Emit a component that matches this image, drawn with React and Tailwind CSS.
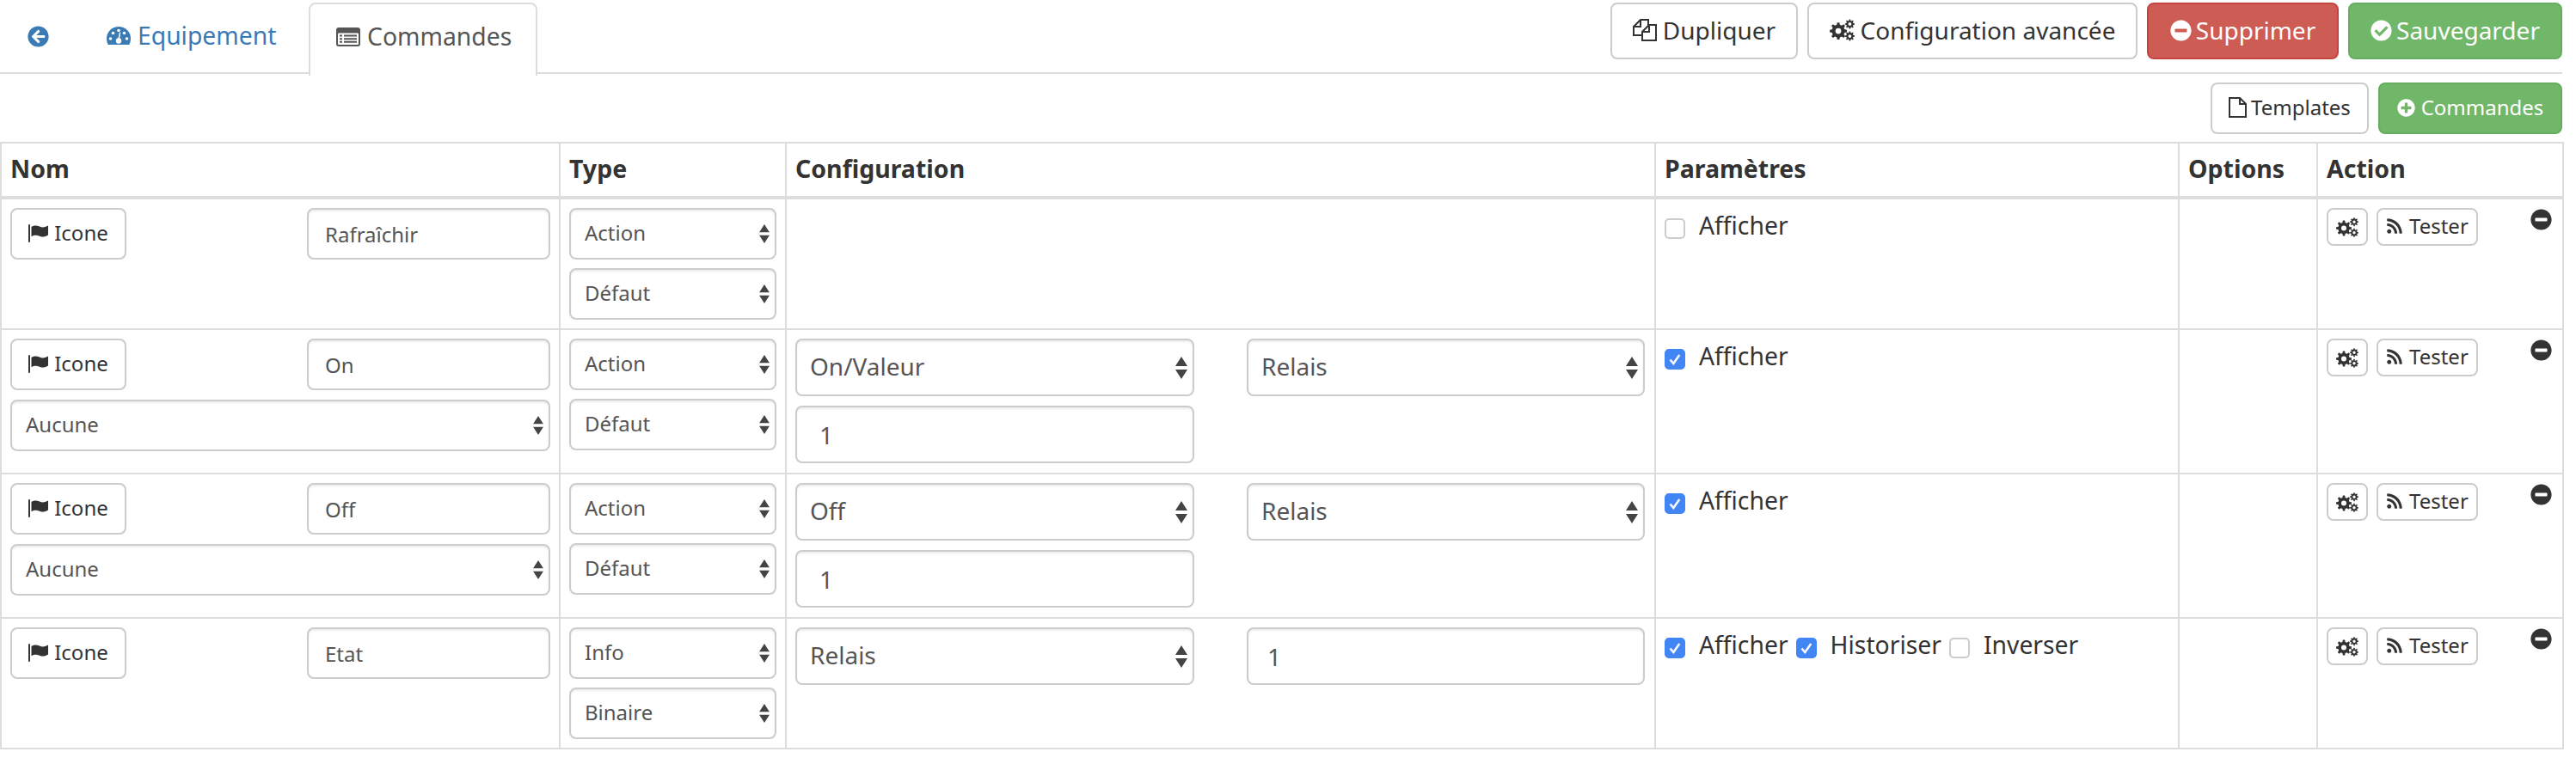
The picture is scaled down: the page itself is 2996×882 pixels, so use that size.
import React from 'react';
import { FaArrowCircleLeft, FaMinusCircle, FaCheckCircle, FaPlusCircle, FaRss } from 'react-icons/fa';

// font-awesome 4 shapes that the icon packages no longer have
const gearPath = (cx, cy, outer, inner, hole, teeth) => {
  let d = '';
  const step = (Math.PI * 2) / teeth;
  for (let i = 0; i < teeth; i++) {
    const a = i * step;
    const pts = [
      [inner, a - step * 0.3],
      [outer, a - step * 0.17],
      [outer, a + step * 0.17],
      [inner, a + step * 0.3],
    ];
    pts.forEach(([r, t], j) => {
      d += `${i === 0 && j === 0 ? 'M' : 'L'}${(cx + r * Math.cos(t)).toFixed(2)} ${(cy + r * Math.sin(t)).toFixed(2)}`;
    });
  }
  d += `Z M${cx - hole} ${cy}a${hole} ${hole} 0 1 0 ${hole * 2} 0a${hole} ${hole} 0 1 0 ${-hole * 2} 0Z`;
  return d;
};

const Cogs = ({ className = 'h-[23px] w-[26px]' }) => (
  <svg viewBox="0 0 26 23" className={`shrink-0 fill-current ${className}`}>
    <path fillRule="evenodd" d={gearPath(9, 12.5, 9, 6.8, 3, 8)} />
    <path fillRule="evenodd" d={gearPath(21, 5.2, 5, 3.7, 1.7, 8)} />
    <path fillRule="evenodd" d={gearPath(21, 17.8, 5, 3.7, 1.7, 8)} />
  </svg>
);

const Flag = () => (
  <svg viewBox="0 0 23 21" className="h-[21px] w-[23px] shrink-0 fill-current">
    <rect x="0" y="0" width="2" height="21" rx="1" />
    <path d="M3.5 3C7 .8 10 1.2 13 2.6c3.200 1.400 6 1.100 10-1V12.500c-4 2.300-6.800 2.600-10 1.200-3-1.300-6-1.400-9.500.6z" />
  </svg>
);

const Gauge = () => (
  <svg viewBox="0 0 28 21" className="h-[21px] w-[28px] shrink-0">
    <path fill="currentColor" d="M0 14a14 14 0 0 1 28 0c0 2.500-.7 5-1.800 7H1.800C.7 19 0 16.500 0 14z" />
    <g fill="#fff">
      <circle cx="4.500" cy="14" r="1.800" />
      <circle cx="7.500" cy="7.500" r="1.800" />
      <circle cx="14" cy="4.500" r="1.800" />
      <circle cx="20.500" cy="7.500" r="1.800" />
      <circle cx="23.500" cy="14" r="1.800" />
      <circle cx="14" cy="16.500" r="3.200" />
      <path d="M12.800 16l2.200-9.500 1.200.3-1.400 9.600z" />
    </g>
  </svg>
);

const ListAlt = () => (
  <svg viewBox="0 0 28 22" className="h-[22px] w-[28px] shrink-0">
    <rect width="28" height="22" rx="3" fill="currentColor" />
    <rect x="2" y="6.500" width="24" height="13.500" rx="1" fill="#fff" />
    <path fill="currentColor" d="M4 8.500h3v2H4zM4 12.200h3v2H4zM4 15.800h3v2H4zM9 8.500h15v2H9zM9 12.200h15v2H9zM9 15.800h15v2H9z" />
  </svg>
);

const Files = () => (
  <svg viewBox="0 0 28 26" className="h-[26px] w-[28px] shrink-0 fill-none stroke-current stroke-2">
    <path d="M10 19H1V9l8-8h9v7" />
    <path d="M9 1v8H1" />
    <path d="M19 7h8v18H11V15z" />
    <path d="M19 7v8h-8" />
  </svg>
);

const FileO = () => (
  <svg viewBox="0 0 21 24" className="h-[24px] w-[21px] shrink-0 fill-none stroke-current stroke-2">
    <path d="M1 1h12l7 7v15H1z" />
    <path d="M13 1v7h7" />
  </svg>
);

const Btn = ({ children, className = '' }) => (
  <button className={`flex items-center justify-center rounded-lg border-2 pb-[2px] ${className}`}>
    {children}
  </button>
);

const Field = ({ value, className = '' }) => (
  <input
    readOnly
    defaultValue={value}
    className={`block rounded-lg border-2 border-[#ccc] bg-white text-[#555] shadow-[inset_0_2px_2px_rgba(0,0,0,0.075)] outline-none ${className}`}
  />
);

const Select = ({ value, className = '', big }) => (
  <div className={`relative ${className}`}>
    <select
      defaultValue={value}
      className={`block w-full appearance-none rounded-lg border-2 border-[#ccc] bg-white pb-[3px] text-[#555] shadow-[inset_0_2px_2px_rgba(0,0,0,0.075)] outline-none ${big ? 'h-[67px] pl-[15px] text-[28px]' : 'h-[60px] pl-[16px] text-[24px]'}`}
    >
      <option>{value}</option>
    </select>
    <svg viewBox="0 0 14 26" className={`absolute top-1/2 -translate-y-1/2 fill-[#444] ${big ? 'right-[8px] h-[26px] w-[14px]' : 'right-[8px] h-[22px] w-[12px]'}`}>
      <path d="M7 0l7 11H0zM7 26L0 15h14z" />
    </svg>
  </div>
);

const Check = ({ label, checked }) => (
  <label className="flex items-start text-[28.3px]">
    <span className="relative mt-[12px] h-6 w-6">
      <input
        type="checkbox"
        defaultChecked={checked}
        className="peer block h-6 w-6 appearance-none rounded-[5px] border-2 border-[#ccc] bg-white checked:border-[#4285f4] checked:bg-[#4285f4]"
      />
      <svg viewBox="0 0 24 24" className="absolute inset-0 hidden h-6 w-6 fill-none stroke-white stroke-[2.500] peer-checked:block">
        <path d="M6.500 12.500l3.800 4.500 7-10" />
      </svg>
    </span>
    <span className="ml-[16px] leading-[40px]">{label}</span>
  </label>
);

const NameCell = ({ name, select }) => (
  <div className="flex flex-col gap-[11px]">
    <div className="flex justify-between">
      <Btn className="h-[60px] w-[135px] gap-[7px] border-[#ccc] bg-white text-[24px] text-[#333]">
        <Flag />
        Icone
      </Btn>
      <Field value={name} className="h-[60px] w-[283px] pl-[19px] text-[24px]" />
    </div>
    {select && <Select value="Aucune" />}
  </div>
);

const TypeCell = ({ type, sub }) => (
  <div className="flex flex-col gap-[10px]">
    <Select value={type} />
    <Select value={sub} />
  </div>
);

const ActionCell = () => (
  <div className="flex justify-between pr-[2px]">
    <div className="flex gap-[10px]">
      <button className="flex h-[44px] w-[48px] items-center justify-center rounded-lg border-2 border-[#ccc] bg-white text-[#333]">
        <Cogs />
      </button>
      <Btn className="h-[44px] w-[118px] !justify-start gap-[7px] border-[#ccc] bg-white pl-[9px] text-[24px] text-[#333]">
        <FaRss className="text-[20px]" />
        Tester
      </Btn>
    </div>
    <FaMinusCircle className="mt-[1px] text-[25px] text-[#333]" />
  </div>
);

const rows = [
  { name: 'Rafraîchir', type: 'Action', sub: 'Défaut', checks: [['Afficher', false]], h: 'h-[151px]' },
  { name: 'On', type: 'Action', sub: 'Défaut', select: true, conf: 'On/Valeur', input: true, relais: true, checks: [['Afficher', true]], h: 'h-[168px]' },
  { name: 'Off', type: 'Action', sub: 'Défaut', select: true, conf: 'Off', input: true, relais: true, checks: [['Afficher', true]], h: 'h-[168px]' },
  { name: 'Etat', type: 'Info', sub: 'Binaire', conf: 'Relais', second: true, checks: [['Afficher', true], ['Historiser', true], ['Inverser', false]], h: 'h-[152px]' },
];

const th = 'border-2 border-b-4 border-[#ddd] px-[10px] pb-[3px] text-left text-[28.5px] font-bold';
const td = 'border-2 border-[#ddd] p-[10px] align-top';

export default function App() {
  return (
    <div className="w-[2980px] bg-white font-['Noto_Sans',sans-serif] text-[28px] text-[#333]">
      {/* onglets */}
      <div className="flex h-[86px] justify-between border-b-2 border-[#ddd]">
        <div className="flex pt-[3px] text-[28.3px]">
          <a className="flex items-center pb-[2px] pl-8 pr-[35px] text-[#3a7ab5]">
            <FaArrowCircleLeft className="text-[25px]" />
          </a>
          <a className="flex w-[267px] items-center gap-[8px] pb-[4px] pl-8 text-[#3a7ab5]">
            <Gauge />
            Equipement
          </a>
          <a className="-mb-[2px] flex h-[85px] w-[266px] items-center gap-[8px] rounded-t-lg border-2 border-b-0 border-[#ddd] bg-white pb-[8px] pl-[30px] text-[#555]">
            <ListAlt />
            Commandes
          </a>
        </div>
        <div className="flex gap-[11px] pt-[3px]">
          <Btn className="h-[66px] w-[218px] gap-[7px] border-[#ccc] bg-white">
            <Files />
            Dupliquer
          </Btn>
          <Btn className="h-[66px] w-[384px] gap-[7px] border-[#ccc] bg-white">
            <Cogs className="h-[26px] w-[29px]" />
            Configuration avancée
          </Btn>
          <Btn className="h-[66px] w-[223px] gap-[5px] border-[#c9433e] bg-[#cd5c54] text-white">
            <FaMinusCircle className="text-[25px]" />
            Supprimer
          </Btn>
          <Btn className="h-[66px] w-[249px] gap-[5px] border-[#66ae5f] bg-[#71b76a] text-white">
            <FaCheckCircle className="text-[25px]" />
            Sauvegarder
          </Btn>
        </div>
      </div>

      {/* barre commandes */}
      <div className="flex h-[79px] items-start justify-end gap-[11px] pt-[10px] text-[24px]">
        <Btn className="h-[60px] w-[184px] gap-[5px] border-[#ccc] bg-white">
          <FileO />
          Templates
        </Btn>
        <Btn className="h-[60px] w-[214px] gap-[7px] border-[#66ae5f] bg-[#71b76a] text-white">
          <FaPlusCircle className="text-[21px]" />
          Commandes
        </Btn>
      </div>

      <table className="w-[2980px] table-fixed border-collapse">
        <colgroup>
          <col className="w-[650px]" />
          <col className="w-[263px]" />
          <col className="w-[1011px]" />
          <col className="w-[609px]" />
          <col className="w-[161px]" />
          <col className="w-[286px]" />
        </colgroup>
        <thead>
          <tr className="h-[64px]">
            {['Nom', 'Type', 'Configuration', 'Paramètres', 'Options', 'Action'].map((t) => (
              <th key={t} className={th}>{t}</th>
            ))}
          </tr>
        </thead>
        <tbody>
          {rows.map((r) => (
            <tr key={r.name} className={r.h}>
              <td className={td}><NameCell name={r.name} select={r.select} /></td>
              <td className={td}><TypeCell type={r.type} sub={r.sub} /></td>
              <td className={td}>
                {r.conf && (
                  <div className="grid grid-cols-[464px_463px] gap-x-[61px] gap-y-[11px]">
                    <Select value={r.conf} big />
                    {r.second
                      ? <Field value="1" className="h-[67px] w-full pl-[22px] text-[28px]" />
                      : <Select value="Relais" big />}
                    {r.input && <Field value="1" className="h-[67px] w-full pl-[26px] text-[28px]" />}
                  </div>
                )}
              </td>
              <td className={td}>
                <div className="flex gap-[9px]">
                  {r.checks.map(([label, checked]) => <Check key={label} label={label} checked={checked} />)}
                </div>
              </td>
              <td className={td}></td>
              <td className={td}><ActionCell /></td>
            </tr>
          ))}
        </tbody>
      </table>
    </div>
  );
}
